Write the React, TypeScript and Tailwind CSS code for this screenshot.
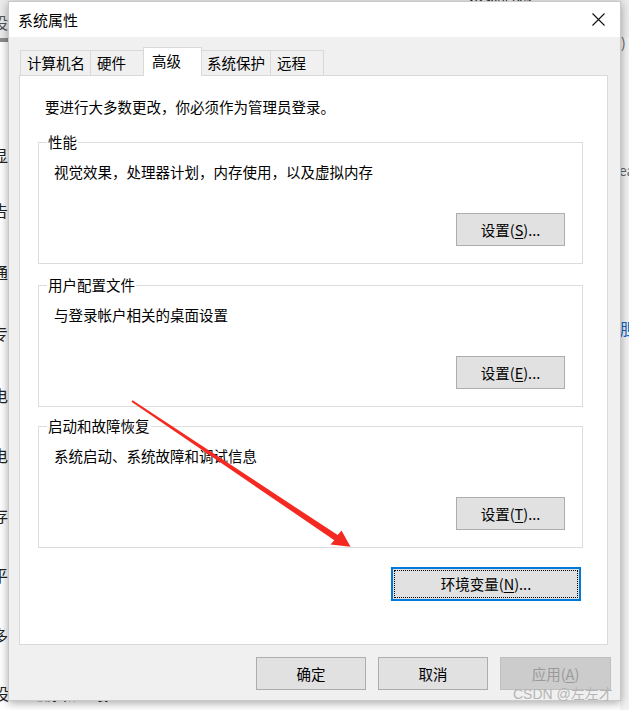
import type { ReactNode } from 'react';

function Key({ k }: { k: string }) {
  return <span className="underline underline-offset-[2px] decoration-[1px]">{k}</span>;
}

interface BtnProps {
  children: ReactNode;
  className?: string;
  disabled?: boolean;
}

function Btn({ children, className = '', disabled }: BtnProps) {
  return (
    <button
      className={`flex items-center justify-center border text-[14.5px] leading-[20px] ${
        disabled
          ? 'bg-[#cccccc] border-[#bfbfbf] text-[#9a9a9a]'
          : 'bg-[#e1e1e1] border-[#adadad] text-black'
      } ${className}`}
    >
      {children}
    </button>
  );
}

function GroupBox({ title, text, button }: { title: string; text: string; button: ReactNode }) {
  return (
    <div className="relative flex h-[122px] flex-col border border-[#dcdcdc] pl-[15px] pr-[17px] pt-[19px] pb-[17px]">
      <span className="absolute left-[8px] top-[-11px] bg-white px-[1px] leading-[20px]">{title}</span>
      <p className="leading-[20px]">{text}</p>
      <div className="mt-auto flex justify-end">
        <Btn className="h-[33px] w-[109px]">{button}</Btn>
      </div>
    </div>
  );
}

const tabs = [
  { name: '计算机名', w: 'w-[71px]' },
  { name: '硬件', w: 'w-[53px]' },
  { name: '高级', w: 'w-[59px]', active: true },
  { name: '系统保护', w: 'w-[70px]' },
  { name: '远程', w: 'w-[53px]' },
];

const leftChars: [string, number][] = [
  ['显', 145],
  ['告', 200],
  ['通', 262],
  ['专', 323],
  ['电', 385],
  ['电', 445],
  ['存', 505],
  ['平', 565],
  ['多', 625],
];

export default function App() {
  return (
    <div className="relative h-[710px] w-[629px] overflow-hidden bg-white font-['Noto_Sans_CJK_SC',sans-serif] text-[14.5px] text-black">
      {/* background window peeking out */}
      <div className="absolute left-0 top-0 h-[38px] w-[629px] bg-[#ececec]" />
      <div className="absolute left-0 top-[38px] h-[4px] w-[20px] bg-[#8c8c8c]" />
      <span className="absolute left-[-8px] top-[12px] text-[16px] leading-[20px] text-[#555]">设</span>
      {leftChars.map(([c, y]) => (
        <span key={y} className="absolute left-[-8px] text-[16px] leading-[20px] text-[#222]" style={{ top: y }}>
          {c}
        </span>
      ))}
      <span className="absolute left-[-7px] top-[683px] text-[16px] leading-[20px] text-[#222]">设置 电源和睡眠</span>
      <span className="absolute left-[468px] top-[-15px] text-[16px] leading-[20px] text-[#222]">系统信息</span>
      <div className="absolute left-[620px] top-[38px] h-[680px] w-[10px] bg-[#f2f2f2]" />
      <span className="absolute left-[621px] top-[32px] text-[14px] leading-[20px] text-[#666]">)</span>
      <span className="absolute left-[619px] top-[160px] text-[14px] leading-[20px] text-[#666]">ea</span>
      <span className="absolute left-[620px] top-[318px] text-[16px] leading-[20px] text-[#0a64c8]">胆</span>

      {/* dialog */}
      <div className="absolute left-[8px] top-[1px] flex h-[700px] w-[613px] flex-col border border-[#c9c9c9] bg-[#f0f0f0] shadow-[0_2px_9px_rgba(0,0,0,0.35)]">
        <div className="flex h-[35px] items-center justify-between bg-white pl-[9px] pr-[15px]">
          <span className="text-[15px] leading-[20px]">系统属性</span>
          <svg width="13" height="13" viewBox="0 0 13 13">
            <path d="M0.5 0.5 L12.5 12.5 M12.5 0.5 L0.5 12.5" stroke="#111" strokeWidth="1.1" fill="none" />
          </svg>
        </div>

        <div className="flex flex-1 flex-col pl-[10px] pr-[9px] pt-[11px]">
          <div className="flex h-[27px] items-end pl-[1px]">
            {tabs.map((t) =>
              t.active ? (
                <div
                  key={t.name}
                  className={`relative z-10 -mb-px -ml-px -mr-px flex h-[29px] ${t.w} items-start border border-b-0 border-[#d9d9d9] bg-white pl-[8px] pt-[3px] leading-[20px]`}
                >
                  {t.name}
                </div>
              ) : (
                <div
                  key={t.name}
                  className={`flex h-[25px] ${t.w} items-center border border-b-0 border-l-0 first:border-l border-[#d9d9d9] bg-[#f0f0f0] pl-[6px] leading-[20px]`}
                >
                  {t.name}
                </div>
              )
            )}
          </div>

          <div className="mr-[3px] flex h-[570px] flex-col border border-[#d9d9d9] bg-white pl-[18px] pr-[24px] pt-[21px]">
            <p className="pl-[7px] leading-[20px]">要进行大多数更改，你必须作为管理员登录。</p>
            <div className="mt-[25px]">
              <GroupBox
                title="性能"
                text="视觉效果，处理器计划，内存使用，以及虚拟内存"
                button={<>设置(<Key k="S" />)...</>}
              />
            </div>
            <div className="mt-[21px]">
              <GroupBox
                title="用户配置文件"
                text="与登录帐户相关的桌面设置"
                button={<>设置(<Key k="E" />)...</>}
              />
            </div>
            <div className="mt-[19px]">
              <GroupBox
                title="启动和故障恢复"
                text="系统启动、系统故障和调试信息"
                button={<>设置(<Key k="T" />)...</>}
              />
            </div>
            <div className="mt-[19px] flex justify-end pr-[2px]">
              <button className="h-[34px] w-[190px] border-2 border-[#0078d7] bg-[#e1e1e1] p-px">
                <span className="flex h-full w-full items-center justify-center border border-dotted border-black leading-[20px]">
                  环境变量(<Key k="N" />)...
                </span>
              </button>
            </div>
          </div>

          <div className="mt-[12px] flex justify-end gap-[12px]">
            <Btn className="h-[33px] w-[110px]">确定</Btn>
            <Btn className="h-[33px] w-[110px]">取消</Btn>
            <Btn className="h-[33px] w-[111px]" disabled>
              应用(<Key k="A" />)
            </Btn>
          </div>
        </div>
      </div>

      {/* annotation arrow */}
      <svg className="pointer-events-none absolute left-0 top-0" width="629" height="710" viewBox="0 0 629 710">
        <polygon
          points="131.4,401.8 334.3,540.2 330.5,544.5 350.5,546.8 341.5,530.5 337.7,535.1 132.6,400.2"
          fill="#f42a22"
        />
      </svg>

      <span className="pointer-events-none absolute left-[513px] top-[684px] font-['Liberation_Sans','Noto_Sans_CJK_SC',sans-serif] text-[14px] leading-[20px] text-[#b5b5b5]">
        CSDN @左左才
      </span>
    </div>
  );
}
